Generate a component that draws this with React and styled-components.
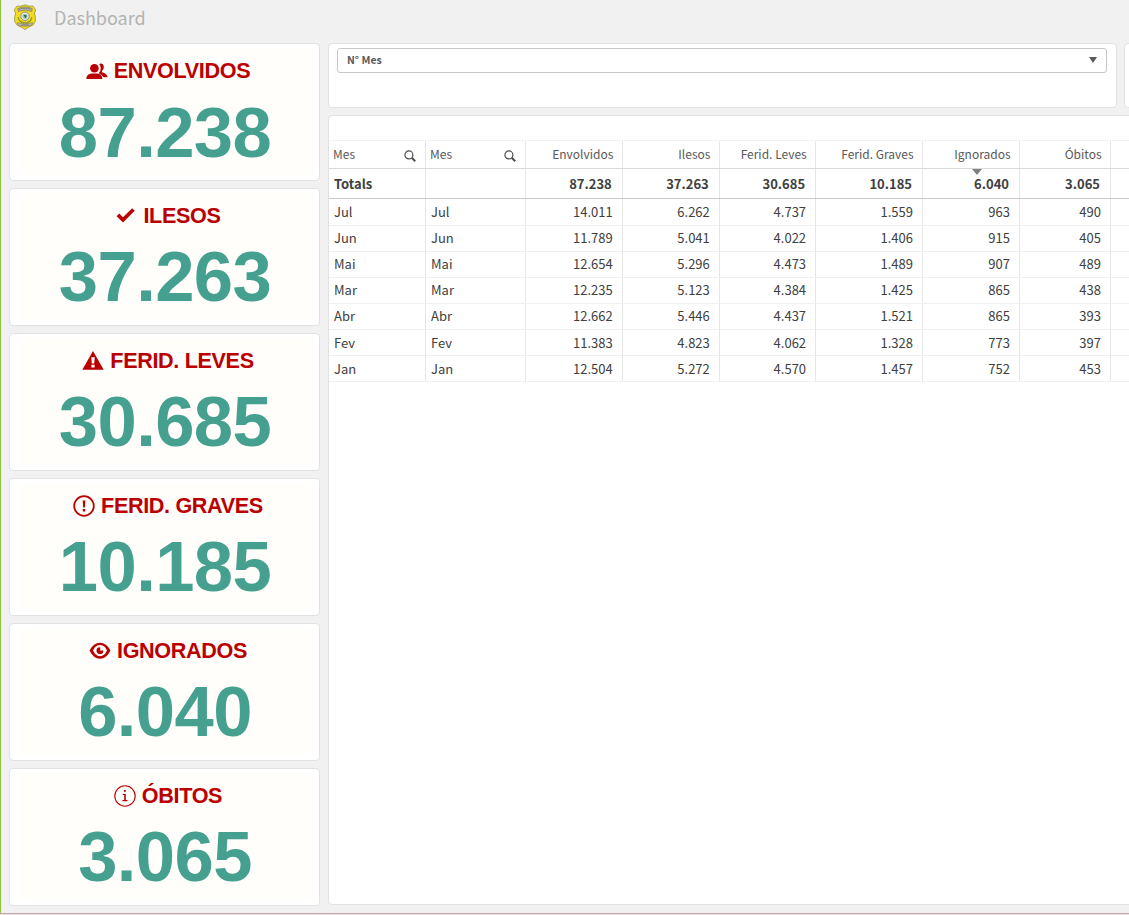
import React from "react";
import styled, { createGlobalStyle } from "styled-components";

const Global = createGlobalStyle`
  * { box-sizing: border-box; }
  body { margin: 0; overflow: hidden; background: #f1f1f1; font-family: "Noto Sans CJK JP", "Noto Sans", sans-serif; }
`;

const Page = styled.div`
  width: 1129px;
  height: 915px;
  overflow: hidden;
  display: flex;
  flex-direction: column;
  background: #f1f1f1;
`;
const Sheet = styled.div`
  height: 913px;
  flex: none;
  border-left: 1px solid #8dc63f;
`;
const BottomEdge = styled.div`
  height: 2px;
  background: #f0dde2;
  border-top: 1px solid #bfaab2;
`;
const Header = styled.header`
  height: 43px;
  display: flex;
  align-items: flex-start;
  padding: 4px 0 0 12px;
`;
const PageTitle = styled.h1`
  margin: -1px 0 0 17px;
  font-size: 18px;
  line-height: 28px;
  font-weight: 400;
  color: #b3b3b3;
`;
const Body = styled.div`
  display: flex;
  gap: 8px;
  padding-left: 8px;
`;
const KpiColumn = styled.div`
  width: 311px;
  height: 862.5px;
  flex: none;
  display: grid;
  grid-template-rows: repeat(6, 1fr);
  gap: 7px;
`;
const Panel = styled.section`
  background: #fff;
  border: 1px solid #e2e2e2;
  border-radius: 4px;
`;
const KpiCard = styled(Panel)`
  padding: 4px 8px 5px 9px;
`;
const KpiInner = styled.div`
  height: 100%;
  background: #fffefa;
  display: flex;
  flex-direction: column;
  align-items: center;
  font-family: "Liberation Sans", Arial, sans-serif;
  font-weight: 700;
`;
const KpiTitle = styled.div`
  height: 36px;
  margin-top: 5px;
  padding-left: 6px;
  display: flex;
  align-items: center;
  gap: 6px;
  font-size: 21.6px;
  letter-spacing: -0.35px;
  line-height: 24px;
  color: #ba0000;
  white-space: nowrap;
  svg { flex: none; margin-top: 1px; }
`;
const KpiValue = styled.div`
  margin-top: 3.5px;
  font-size: 70.6px;
  letter-spacing: -0.6px;
  line-height: 80px;
  color: #46a08f;
`;
const Main = styled.div`
  flex: none;
  display: flex;
  flex-direction: column;
  gap: 7px;
`;
const FilterRow = styled.div`
  display: flex;
  gap: 7px;
`;
const FilterPanel = styled(Panel)`
  width: ${(p) => p.$width}px;
  height: 65px;
  padding: 4px 9px 4px 8px;
`;
const Select = styled.div`
  height: 25px;
  border: 1px solid #c8c8c8;
  border-radius: 3px;
  display: flex;
  align-items: center;
  justify-content: space-between;
  padding: 0 9px 1px;
  font-size: 10.5px;
  line-height: 16px;
  font-weight: 700;
  color: #595959;
`;
const TablePanel = styled(Panel)`
  width: 900px;
  height: 790px;
  padding-top: 24px;
  overflow: hidden;
`;
const Row = styled.div`
  display: grid;
  grid-template-columns: 97px 100.2px 96.6px 97px 96.3px 106.9px 97px 91px 60px;
  height: ${(p) => p.$height}px;
  border-bottom: 1px solid ${(p) => p.$line};
`;
const HeadRow = styled(Row)`
  border-top: 1px solid #f2f2f2;
  font-size: 12px;
  color: #595959;
`;
const TotalRow = styled(Row)`
  font-size: 13px;
  font-weight: 700;
  color: #404040;
`;
const DataRow = styled(Row)`
  font-size: 13px;
  color: #404040;
`;
const Cell = styled.div`
  position: relative;
  display: flex;
  align-items: center;
  justify-content: ${(p) => (p.$num ? "flex-end" : "space-between")};
  padding: 0 ${(p) => p.$right ?? 9}px ${(p) => p.$bottom ?? 0}px ${(p) => p.$left ?? 5}px;
  border-right: 1px solid #e6e6e6;
  line-height: 20px;
  white-space: nowrap;
  &:last-child { border-right: 0; }
`;
const SortMark = styled.svg`
  position: absolute;
  left: 49px;
  bottom: -7px;
`;
const SearchGlyph = styled.svg`
  margin-top: 4px;
`;

function Badge() {
  return (
    <svg width="24" height="26" viewBox="0 0 24 26">
      <path d="M4 2Q8 2.8 12 .8Q16 2.8 20 2L22.8 6L21.4 9Q22.8 13 22.4 17Q21 22 16 23L12 25.5L8 23Q3 22 1.6 17Q1.2 13 2.6 9L1.2 6Z" fill="#f4dc1a" stroke="#94893f" strokeWidth=".7" />
      <path d="M4.8 4.6Q12 1.3 19.2 4.6L18.6 7.4Q12 4.4 5.4 7.4Z" fill="#bcbcb8" stroke="#66645a" strokeWidth=".6" />
      <path d="M6.3 5.4Q12 3.1 17.7 5.4" fill="none" stroke="#55554c" strokeWidth="1" strokeDasharray="1 .7" />
      <path d="M5.2 13Q5.6 18.6 12 18.8Q18.4 18.6 18.8 13" fill="none" stroke="#8a9a2c" strokeWidth="1.2" />
      <circle cx="12" cy="12.3" r="4.2" fill="#f1efe0" stroke="#7a8587" strokeWidth=".9" />
      <circle cx="12" cy="12.3" r="2.6" fill="#9cc4bb" />
      <path d="M10.5 10.8L13.8 11.6L12.4 14.4Z" fill="#176c57" />
      <path d="M4.2 18.8Q12 21 19.8 18.8L18.2 21.6Q12 22.9 5.8 21.6Z" fill="#bdbbb0" stroke="#77735a" strokeWidth=".6" />
      <path d="M8.5 20.9H15.5" stroke="#74726a" strokeWidth="1.1" strokeDasharray="1.3 .6" />
    </svg>
  );
}

const icons = {
  people: (
    <>
      <path d="M13.2 3.1Q15 1.9 16.8 3.2Q18.3 4.9 17.7 7.2Q17.2 9 16 10V11.3Q21.2 12.8 21.6 16.2H17.5Q16.2 13.5 12.7 12.2Q15 9.9 14.7 6.8Q14.5 4.6 13.2 3.1Z" />
      <circle cx="8.4" cy="7.3" r="4.3" />
      <path d="M0.3 18Q.4 13.1 5.8 12.6H11Q16.2 13.1 16.4 18Z" />
    </>
  ),
  check: <path d="M1.6 11.3L4.2 8.6L8 12.2L17.2 3.2L19.7 5.8L8 17.4Z" />,
  warning: (
    <path fillRule="evenodd" d="M11 1.1L21.7 19.8H.3ZM9.2 7.2L9.8 13.5H12.2L12.8 7.2ZM9.4 14.8V17.6H12.6V14.8Z" />
  ),
  alert: (
    <>
      <circle cx="11" cy="11" r="9.8" fill="none" stroke="currentColor" strokeWidth="1.8" />
      <path d="M9.7 5.6H12.4L11.9 12.6H10.2ZM9.8 14H12.3V16.4H9.8Z" />
    </>
  ),
  eye: (
    <>
      <path fillRule="evenodd" d="M.5 10.5Q4.5 2.7 11 2.7T21.5 10.5Q17.5 18.7 11 18.7T.5 10.5ZM4 10.6Q5.6 14.4 8.3 15.6Q11 16.7 13.7 15.6Q16.4 14.4 18 10.6Q16.4 6.8 13.7 5.6Q11 4.6 8.3 5.6Q5.6 6.8 4 10.6Z" />
      <path d="M11.2 7.3V10.4H14.3A3.4 3.4 0 1 1 11.2 7.3Z" />
    </>
  ),
  info: (
    <>
      <circle cx="11" cy="11" r="10.2" fill="none" stroke="currentColor" strokeWidth="1.1" />
      <path d="M9.9 5H11.8V6.8H9.9ZM8.7 9H11.8V15.1H13.5V16.2H8.4V15.1H10.2V10.1H8.7Z" />
    </>
  ),
};

function KpiIcon({ name }) {
  return (
    <svg width="22" height="22" viewBox="0 0 22 22" fill="currentColor">
      {icons[name]}
    </svg>
  );
}

function SearchIcon() {
  return (
    <SearchGlyph width="12" height="12" viewBox="0 0 12 12" fill="none" stroke="#4d4d4d">
      <circle cx="4.9" cy="4.9" r="4" strokeWidth="1.2" />
      <path d="M7.8 7.8L11.2 11.2" strokeWidth="2" />
    </SearchGlyph>
  );
}

const kpis = [
  ["people", "ENVOLVIDOS", "87.238"],
  ["check", "ILESOS", "37.263"],
  ["warning", "FERID. LEVES", "30.685"],
  ["alert", "FERID. GRAVES", "10.185"],
  ["eye", "IGNORADOS", "6.040"],
  ["info", "ÓBITOS", "3.065"],
];
const measures = ["Envolvidos", "Ilesos", "Ferid. Leves", "Ferid. Graves", "Ignorados", "Óbitos"];
const totals = ["87.238", "37.263", "30.685", "10.185", "6.040", "3.065"];
const rows = [
  ["Jul", "14.011", "6.262", "4.737", "1.559", "963", "490"],
  ["Jun", "11.789", "5.041", "4.022", "1.406", "915", "405"],
  ["Mai", "12.654", "5.296", "4.473", "1.489", "907", "489"],
  ["Mar", "12.235", "5.123", "4.384", "1.425", "865", "438"],
  ["Abr", "12.662", "5.446", "4.437", "1.521", "865", "393"],
  ["Fev", "11.383", "4.823", "4.062", "1.328", "773", "397"],
  ["Jan", "12.504", "5.272", "4.570", "1.457", "752", "453"],
];

export default function App() {
  return (
    <Page>
      <Global />
      <Sheet>
        <Header>
          <Badge />
          <PageTitle>Dashboard</PageTitle>
        </Header>
        <Body>
          <KpiColumn>
            {kpis.map(([icon, label, value]) => (
              <KpiCard key={label}>
                <KpiInner>
                  <KpiTitle>
                    <KpiIcon name={icon} />
                    {label}
                  </KpiTitle>
                  <KpiValue>{value}</KpiValue>
                </KpiInner>
              </KpiCard>
            ))}
          </KpiColumn>
          <Main>
            <FilterRow>
              <FilterPanel $width={789}>
                <Select>
                  N° Mes
                  <svg width="8" height="6" viewBox="0 0 8 6">
                    <path d="M0 0H8L4 6Z" fill="#595959" />
                  </svg>
                </Select>
              </FilterPanel>
              <FilterPanel $width={104} />
            </FilterRow>
            <TablePanel>
              <HeadRow $height={29} $line="#d9d9d9">
                {[0, 1].map((i) => (
                  <Cell key={i} $left={4} $bottom={1}>
                    Mes
                    <SearchIcon />
                  </Cell>
                ))}
                {measures.map((m) => (
                  <Cell key={m} $num $right={8.4} $bottom={1}>
                    {m}
                    {m === "Ignorados" && (
                      <SortMark width="10" height="6" viewBox="0 0 10 6">
                        <path d="M0 0H10L5 6Z" fill="#808080" />
                      </SortMark>
                    )}
                  </Cell>
                ))}
                <Cell />
              </HeadRow>
              <TotalRow $height={30} $line="#c9c9c9">
                <Cell>Totals</Cell>
                <Cell />
                {totals.map((t) => (
                  <Cell key={t} $num $right={10}>{t}</Cell>
                ))}
                <Cell />
              </TotalRow>
              {rows.map(([month, ...values], r) => (
                <DataRow key={month} $height={r === 0 ? 26.5 : 26.15} $line="#f0f0f0">
                  <Cell>{month}</Cell>
                  <Cell>{month}</Cell>
                  {values.map((v, i) => (
                    <Cell key={i} $num>{v}</Cell>
                  ))}
                  <Cell />
                </DataRow>
              ))}
            </TablePanel>
          </Main>
        </Body>
      </Sheet>
      <BottomEdge />
    </Page>
  );
}
